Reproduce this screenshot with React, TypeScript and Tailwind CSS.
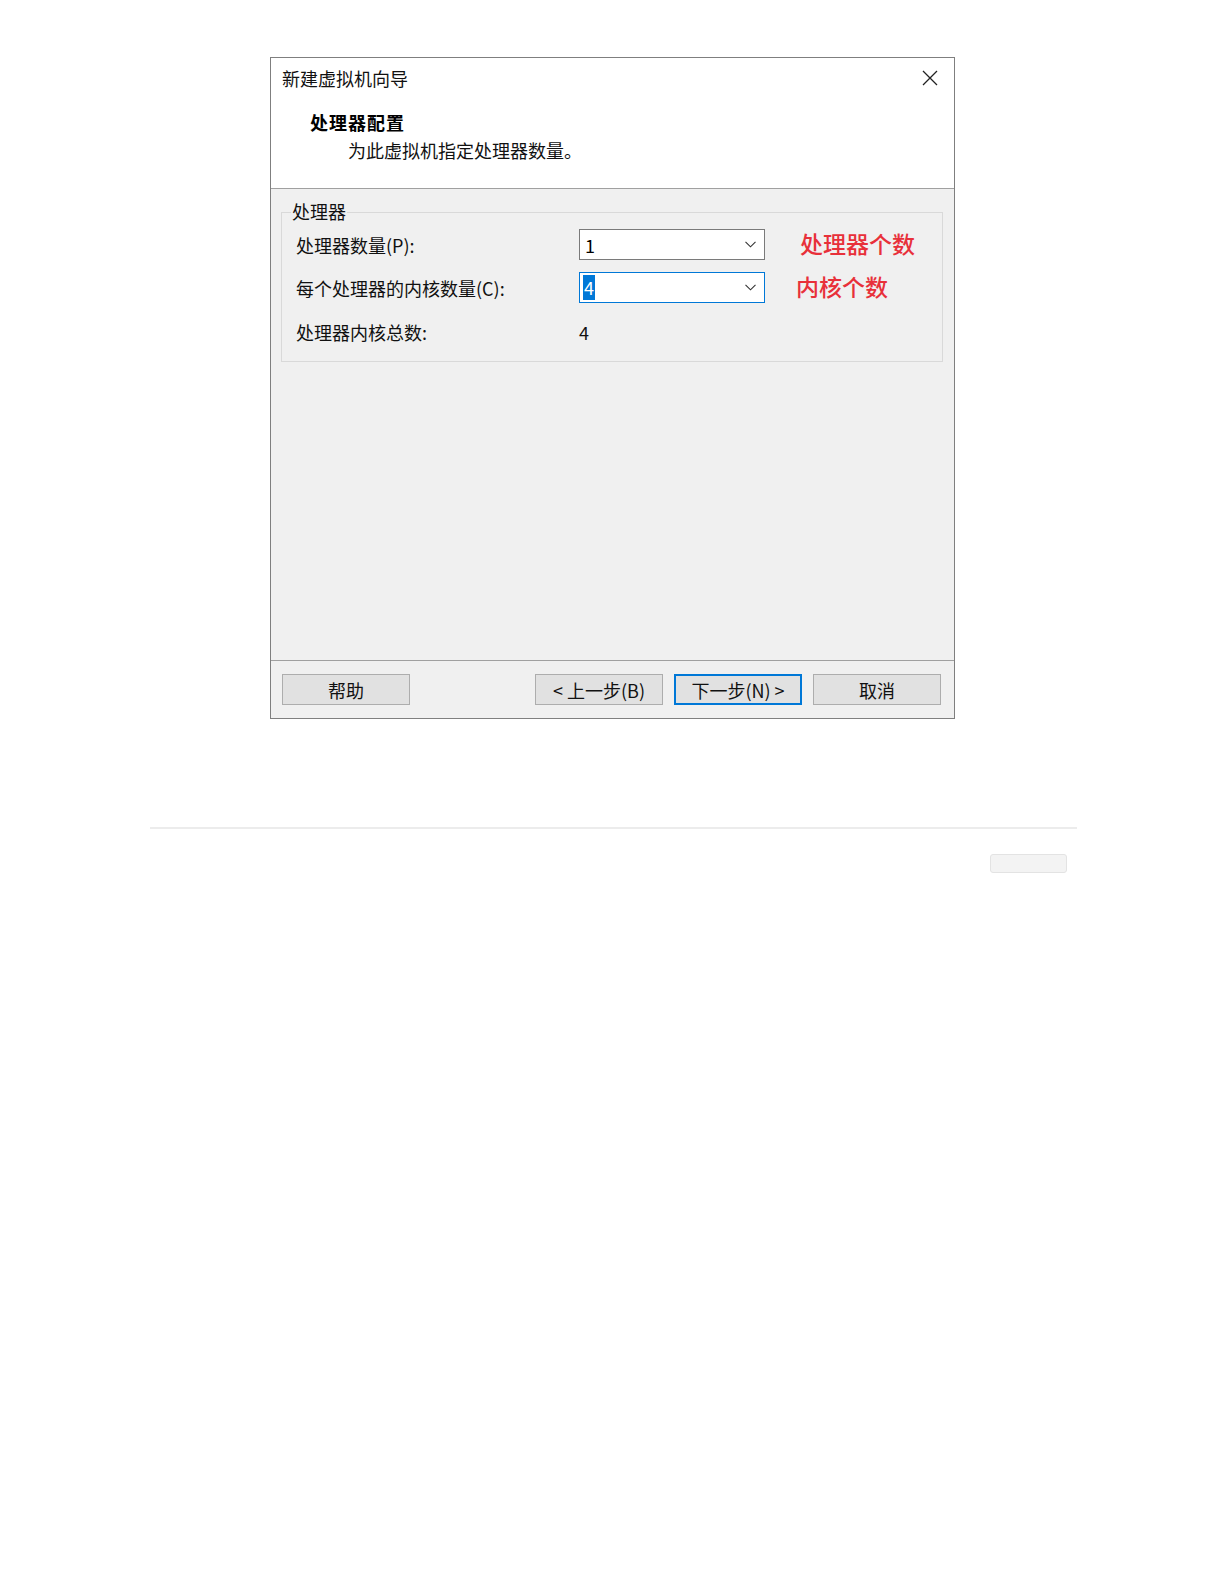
import React from "react";

const FONT = { fontFamily: '"Noto Sans CJK SC", "Noto Sans", sans-serif' };

function Chevron() {
  return (
    <svg width="11" height="7" viewBox="0 0 11 7" fill="none">
      <path d="M0.5 0.8 L5.5 5.8 L10.5 0.8" stroke="#333" strokeWidth="1.1" />
    </svg>
  );
}

function Btn({ children, primary }: { children: React.ReactNode; primary?: boolean }) {
  return (
    <div
      className={
        "w-[128px] h-[31px] flex items-center justify-center text-[18px] leading-[24px] text-[#111] bg-[#e1e1e1] " +
        (primary ? "border-2 border-[#0078d7]" : "border border-[#adadad]")
      }
    >
      {children}
    </div>
  );
}

export default function App() {
  return (
    <div className="w-[1225px] min-h-[1585px] bg-white pt-[57px]" style={FONT}>
      {/* Dialog */}
      <div className="ml-[270px] w-[685px] h-[662px] border border-[#7f7f7f] bg-[#f0f0f0] flex flex-col">
        {/* Header */}
        <div className="h-[131px] bg-white border-b border-[#a0a0a0] pt-[8px]">
          <div className="flex items-center justify-between pl-[11px] pr-[16px] h-[24px]">
            <span className="text-[18px] leading-[24px] text-[#111]">新建虚拟机向导</span>
            <svg width="16" height="16" viewBox="0 0 16 16" className="mt-[-1px]">
              <path d="M1 1 L15 15 M15 1 L1 15" stroke="#222" strokeWidth="1.3" />
            </svg>
          </div>
          <div className="mt-[20px] pl-[39px] text-[18px] leading-[24px] font-bold text-black tracking-[1px]">
            处理器配置
          </div>
          <div className="mt-[4px] pl-[77px] text-[18px] leading-[24px] text-[#111]">
            为此虚拟机指定处理器数量。
          </div>
        </div>

        {/* Body */}
        <div className="flex-1 pt-[23px] pl-[10px] pr-[11px]">
          <div className="relative border border-[#d9d9d9] pt-[16px] pb-[17px] pl-[14px]">
            <span className="absolute left-[9px] -top-[14px] px-[1px] bg-[#f0f0f0] text-[18px] leading-[24px] text-[#111]">
              处理器
            </span>
            <div className="flex items-center h-[31px]">
              <span className="w-[283px] text-[18px] leading-[24px] text-[#111]">处理器数量(P):</span>
              <div className="w-[186px] h-[31px] bg-white border border-[#7a7a7a] flex items-center justify-between pl-[5px] pr-[8px]">
                <span className="text-[18px] leading-[24px] text-black">1</span>
                <Chevron />
              </div>
              <span className="ml-[35px] -mt-[4px] text-[23px] leading-[30px] font-medium text-[#e8303a]">处理器个数</span>
            </div>
            <div className="flex items-center h-[31px] mt-[12px]">
              <span className="w-[283px] text-[18px] leading-[24px] text-[#111]">每个处理器的内核数量(C):</span>
              <div className="w-[186px] h-[31px] bg-white border border-[#0078d7] flex items-center justify-between pl-[3px] pr-[8px]">
                <span className="text-[18px] leading-[24px] h-[25px] px-[1px] bg-[#0078d7] text-white">4</span>
                <Chevron />
              </div>
              <span className="ml-[31px] -mt-[4px] text-[23px] leading-[30px] font-medium text-[#e8303a]">内核个数</span>
            </div>
            <div className="flex items-center h-[24px] mt-[17px]">
              <span className="w-[283px] text-[18px] leading-[24px] text-[#111]">处理器内核总数:</span>
              <span className="text-[18px] leading-[24px] text-[#111]">4</span>
            </div>
          </div>
        </div>

        {/* Footer */}
        <div className="h-[58px] border-t border-[#a0a0a0] pt-[13px] pl-[11px] flex">
          <Btn>帮助</Btn>
          <div className="ml-[125px]">
            <Btn>&lt; 上一步(B)</Btn>
          </div>
          <div className="ml-[11px]">
            <Btn primary>下一步(N) &gt;</Btn>
          </div>
          <div className="ml-[11px]">
            <Btn>取消</Btn>
          </div>
        </div>
      </div>

      {/* Below */}
      <div className="ml-[150px] w-[927px] mt-[108px]">
        <div className="h-[2px] bg-[#ececec]" />
        <div className="flex justify-end pr-[10px] mt-[25px]">
          <div className="w-[77px] h-[19px] rounded-[3px] bg-[#f3f3f3] border border-[#e3e3e3]" />
        </div>
      </div>
    </div>
  );
}
